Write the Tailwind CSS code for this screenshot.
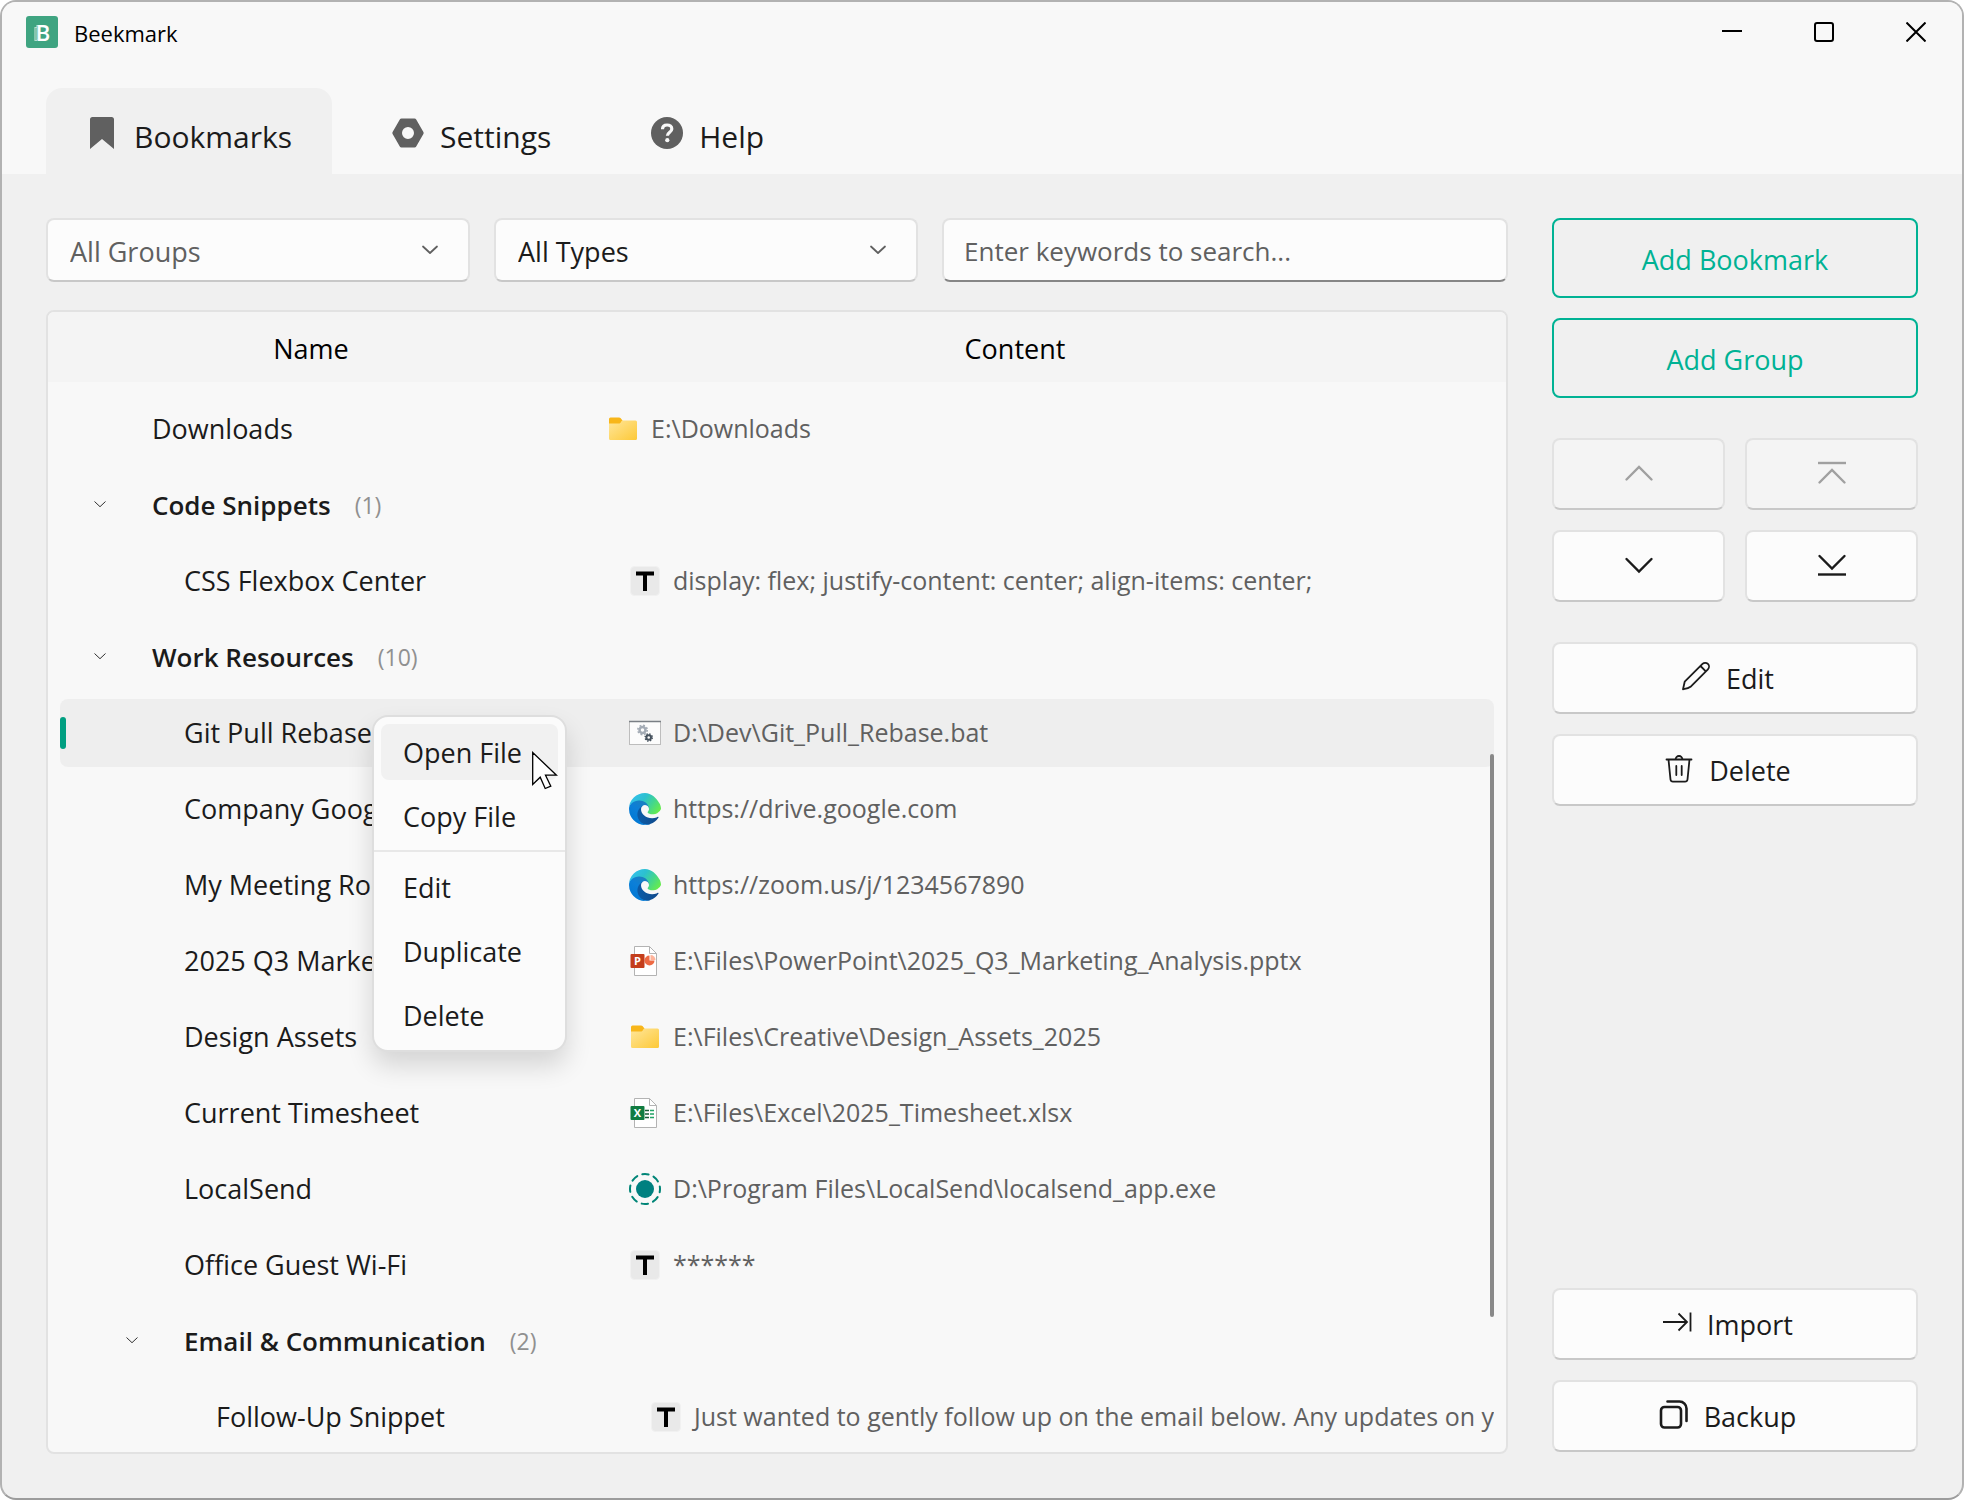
<!DOCTYPE html>
<html lang="en">
<head>
    <meta charset="UTF-8">
    <title>Beekmark</title>
    <script src="https://cdn.jsdelivr.net/npm/@tailwindcss/browser@4"></script>
</head>
<body class="bg-white font-['Open_Sans',sans-serif] text-[27px] text-[#1b1b1b]">

    <!-- Shared icons -->
    <svg class="absolute size-0" aria-hidden="true">
        <defs>
            <linearGradient id="folderFront" x1="0" y1="0" x2="1" y2="1">
                <stop offset="0" stop-color="#ffe69b" />
                <stop offset="1" stop-color="#fdc937" />
            </linearGradient>
            <linearGradient id="edgeNavy" x1="0.2" y1="0" x2="1" y2="0">
                <stop offset="0" stop-color="#0c59a4" />
                <stop offset="1" stop-color="#114a8b" />
            </linearGradient>
            <linearGradient id="edgeBlue" x1="0.8" y1="0.2" x2="0.3" y2="1">
                <stop offset="0" stop-color="#1b7fc2" />
                <stop offset="0.4" stop-color="#0c7fd8" />
                <stop offset="1" stop-color="#0078d4" />
            </linearGradient>
            <linearGradient id="edgeGreen" x1="0" y1="0.2" x2="1" y2="0.7">
                <stop offset="0" stop-color="#35c1f1" />
                <stop offset="0.4" stop-color="#2cc0cf" />
                <stop offset="0.7" stop-color="#43d68e" />
                <stop offset="1" stop-color="#66eb4e" />
            </linearGradient>
        </defs>
        <symbol id="icon-folder" viewBox="0 0 32 32">
            <path d="M2 6a1.500 1.500 0 0 1 1.500-1.500h8.500a2 2 0 0 1 1.500.6l2 2.400V14H2z" fill="#f8b61a" />
            <path d="M2 10.500h10.500c1.500 0 1.500-3 3-3H28.500A1.500 1.500 0 0 1 30 9v16.500a1.500 1.500 0 0 1-1.500 1.500h-25A1.500 1.500 0 0 1 2 25.500z" fill="url(#folderFront)" />
        </symbol>
        <symbol id="icon-text" viewBox="0 0 32 32">
            <rect x="1.500" y="1.500" width="29" height="29" rx="4" fill="#e9e9e9" stroke="#f1f1f1" />
            <path d="M7 8.500h18M16 8v18" stroke="#000" stroke-width="4" fill="none" />
        </symbol>
        <symbol id="icon-edge" viewBox="0 0 256 256">
            <g transform="translate(-4.630 -4.920)">
                <path d="M235.680 195.460a93.730 93.730 0 0 1-10.540 4.710 101.870 101.870 0 0 1-35.900 6.460c-47.320 0-88.540-32.550-88.540-74.320a31.480 31.480 0 0 1 16.430-27.670c-42.800 1.800-53.800 46.400-53.800 72.530 0 73.880 68.090 81.370 82.760 81.370 7.910 0 19.840-2.300 27-4.560l1.310-.44a128.340 128.340 0 0 0 66.600-52.800 4 4 0 0 0-5.320-5.280z" fill="url(#edgeNavy)" />
                <path d="M110.340 246.340A79.200 79.200 0 0 1 87.600 225a80.720 80.720 0 0 1 29.530-120.360c3.120-1.470 8.450-4.130 15.540-4a32.350 32.350 0 0 1 25.690 13 31.880 31.880 0 0 1 6.360 18.660c0-.21 24.460-79.600-80-79.600-43.900 0-80 41.660-80 78.210a130.150 130.150 0 0 0 12.110 56 128 128 0 0 0 156.380 67.110 75.550 75.550 0 0 1-62.780-8z" fill="url(#edgeBlue)" />
                <path d="M156.940 153.780c-.81 1.050-3.300 2.500-3.300 5.660 0 2.610 1.700 5.120 4.720 7.230 14.380 10 41.490 8.680 41.560 8.680a59.560 59.560 0 0 0 30.270-8.350 61.380 61.380 0 0 0 30.440-33.600c.26-22.410-8-37.310-11.340-43.910C228.090 48 182.350 4.920 132.610 4.920a128 128 0 0 0-128 126.200c.48-36.540 36.800-66.050 80-66.050 3.500 0 23.460.34 42 10.070 16.340 8.580 24.900 18.940 30.850 29.210 6.180 10.670 7.280 24.150 7.280 29.520s-2.740 13.330-7.800 19.910z" fill="url(#edgeGreen)" />
            </g>
        </symbol>
        <symbol id="icon-bat" viewBox="0 0 32 32">
            <rect x="0.500" y="4.500" width="31" height="23" fill="#fcfcfc" stroke="#bdbdbd" />
            <path d="M0 4.500h32" stroke="#7a7f85" stroke-width="1.500" />
            <circle cx="13.500" cy="13" r="3" fill="none" stroke="#a3abb5" stroke-width="2.500" />
            <circle cx="13.500" cy="13" r="4.700" fill="none" stroke="#a3abb5" stroke-width="1.600" stroke-dasharray="1.850 1.850" />
            <circle cx="19.700" cy="20.500" r="2.300" fill="none" stroke="#46525e" stroke-width="2" />
            <circle cx="19.700" cy="20.500" r="3.600" fill="none" stroke="#46525e" stroke-width="1.400" stroke-dasharray="1.420 1.420" />
        </symbol>
        <symbol id="icon-page" viewBox="0 0 32 32">
            <path d="M5.500 1.500H20.500l7 7v22h-22z" fill="#fff" stroke="#b3b3b3" />
            <path d="M20.500 1.500v7h7" fill="none" stroke="#b3b3b3" />
        </symbol>
        <symbol id="icon-pptx" viewBox="0 0 32 32">
            <use href="#icon-page" />
            <path d="M20.500 10.500a5 5 0 1 0 5 5h-5z" fill="#ee6a44" />
            <path d="M21.500 10v5h5a5 5 0 0 0-5-5z" fill="#ffb49b" />
            <rect x="1.500" y="9" width="14" height="14" rx="1" fill="#c43e1c" />
            <text x="8.500" y="20" text-anchor="middle" font-size="11" font-weight="700" fill="#fff">P</text>
        </symbol>
        <symbol id="icon-xlsx" viewBox="0 0 32 32">
            <use href="#icon-page" />
            <path d="M16 13.500h4M16 17h4M16 20.500h4" stroke="#185c37" stroke-width="1.700" />
            <path d="M21 13.500h4M21 17h4M21 20.500h4" stroke="#21a366" stroke-width="1.700" />
            <rect x="1.500" y="9" width="14" height="14" rx="1" fill="#107c41" />
            <text x="8.500" y="20" text-anchor="middle" font-size="11" font-weight="700" fill="#fff">X</text>
        </symbol>
        <symbol id="icon-localsend" viewBox="0 0 32 32">
            <circle cx="16" cy="16" r="9" fill="#008080" />
            <circle cx="16" cy="16" r="15" fill="none" stroke="#008577" stroke-width="2" stroke-linecap="round" stroke-dasharray="6.500 5.281" stroke-dashoffset="3.250" />
        </symbol>
        <symbol id="icon-tree" viewBox="0 0 12 12">
            <path d="M.5 2.500 6 7.700l5.500-5.200" fill="none" stroke="#303030" />
        </symbol>
        <symbol id="icon-select" viewBox="0 0 18 12">
            <path d="m2 2.500 7 6.500 7-6.500" fill="none" stroke="#606060" stroke-width="1.800" stroke-linecap="round" stroke-linejoin="round" />
        </symbol>
    </svg>

    <div class="flex h-screen flex-col overflow-hidden rounded-2xl border-2 border-[#b2b2b2] border-b-[#9c9c9c] bg-[#f0f0f0]">

        <header class="bg-[#f8f8f8]">
            <div class="flex h-[60px] items-center">
                <svg class="ml-6 size-8" viewBox="0 0 32 32" aria-hidden="true">
                    <rect width="32" height="32" rx="3" fill="#3fa481" />
                    <path d="M11 11.500H9v13H11M12 9.500h-1v14.500H12" fill="none" stroke="#b5dccd" stroke-width="1.200" />
                    <text x="17" y="24.500" text-anchor="middle" font-size="22" font-weight="600" fill="#fff">B</text>
                </svg>
                <h1 class="ml-4 pt-0.5 text-[22px] text-black">Beekmark</h1>
                <div class="ml-auto flex h-full">
                    <button type="button" aria-label="Minimize" class="flex w-[92px] items-center justify-center">
                        <svg class="size-5" viewBox="0 0 20 20"><path d="M0 9h20" stroke="#000" stroke-width="2" /></svg>
                    </button>
                    <button type="button" aria-label="Maximize" class="flex w-[92px] items-center justify-center">
                        <svg class="size-5" viewBox="0 0 20 20"><rect x="1" y="1" width="18" height="18" rx="2" fill="none" stroke="#000" stroke-width="2" /></svg>
                    </button>
                    <button type="button" aria-label="Close" class="flex w-[92px] items-center justify-center">
                        <svg class="size-5" viewBox="0 0 20 20"><path d="m.5.5 19 19m0-19-19 19" stroke="#000" stroke-width="2" /></svg>
                    </button>
                </div>
            </div>

            <nav class="mt-[26px] flex gap-5 px-11 text-[30px]">
                <a href="#bookmarks" class="flex h-[86px] items-center gap-4 rounded-t-2xl bg-[#f0f0f0] px-10 pt-2.5">
                    <svg class="mb-1.5 size-8" viewBox="0 0 32 32"><path d="M4 2.500A2.500 2.500 0 0 1 6.500 0h19A2.500 2.500 0 0 1 28 2.500V32L16 22 4 32z" fill="#606060" /></svg>
                    Bookmarks
                </a>
                <a href="#settings" class="flex h-[86px] items-center gap-4 rounded-t-2xl px-10 pt-2.5">
                    <svg class="mb-1.5 size-8" viewBox="0 0 32 32"><path fill-rule="evenodd" d="M9.500 1.500h13a2 2 0 0 1 1.700 1l7.200 12.500a2 2 0 0 1 0 2l-7.200 12.500a2 2 0 0 1-1.700 1h-13a2 2 0 0 1-1.700-1L.6 17a2 2 0 0 1 0-2L7.800 2.500a2 2 0 0 1 1.700-1zM16 10a6 6 0 1 0 0 12 6 6 0 0 0 0-12z" fill="#606060" /></svg>
                    Settings
                </a>
                <a href="#help" class="flex h-[86px] items-center gap-4 rounded-t-2xl px-10 pt-2.5">
                    <svg class="mb-1.5 size-8" viewBox="0 0 32 32">
                        <circle cx="16" cy="16" r="16" fill="#606060" />
                        <path d="M11.500 12.300c0-2.700 1.900-4.300 4.600-4.300s4.700 1.500 4.700 4c0 3.300-4.400 3.200-4.400 6.800" fill="none" stroke="#f8f8f8" stroke-width="3.200" />
                        <circle cx="16.300" cy="23.200" r="2.100" fill="#f8f8f8" />
                    </svg>
                    Help
                </a>
            </nav>
        </header>

        <main class="flex min-h-0 flex-1 gap-11 p-11">

            <section class="flex min-w-0 flex-1 flex-col gap-7">
                <form class="flex gap-6">
                    <div class="relative w-[424px]">
                        <select aria-label="Group" class="h-16 w-full appearance-none rounded-lg border-2 border-[#e2e2e2] border-b-[#c8c8c8] bg-[#fcfcfc] px-[22px] pt-1 text-[#606060]">
                            <option>All Groups</option>
                        </select>
                        <svg class="pointer-events-none absolute top-[26px] right-[31px] h-3 w-[18px]"><use href="#icon-select" /></svg>
                    </div>
                    <div class="relative w-[424px]">
                        <select aria-label="Type" class="h-16 w-full appearance-none rounded-lg border-2 border-[#e2e2e2] border-b-[#c8c8c8] bg-[#fcfcfc] px-[22px] pt-1">
                            <option>All Types</option>
                        </select>
                        <svg class="pointer-events-none absolute top-[26px] right-[31px] h-3 w-[18px]"><use href="#icon-select" /></svg>
                    </div>
                    <input type="text" aria-label="Search" placeholder="Enter keywords to search..." class="h-16 min-w-0 flex-1 rounded-lg border-2 border-[#e2e2e2] border-b-[#868686] bg-[#fcfcfc] px-5 pt-0.5 text-[26px] placeholder:text-[#606060]">
                </form>

                <div class="relative min-h-0 flex-1 overflow-hidden rounded-lg border-2 border-[#e2e2e2] bg-[#f8f8f8]">
                    <table class="w-full table-fixed border-separate border-spacing-0 whitespace-nowrap">
                        <thead class="bg-[#f4f4f4] text-black">
                            <tr class="h-[70px]">
                                <th class="w-[526px] pt-1 font-normal">Name</th>
                                <th class="pt-1 pr-[50px] font-normal">Content</th>
                            </tr>
                        </thead>
                        <tbody>
                            <tr class="h-[85px]">
                                <td class="pt-[9px]"><div class="ml-3 flex h-[68px] items-center pl-23">Downloads</div></td>
                                <td class="pt-[9px]"><div class="mr-3 flex h-[68px] items-center gap-3 overflow-hidden pl-[33px] text-[25px] text-[#606060]"><svg class="size-8 shrink-0"><use href="#icon-folder" /></svg>E:\Downloads</div></td>
                            </tr>
                            <tr class="h-[76px]">
                                <td>
                                    <div class="ml-3 flex h-[68px] items-center pl-[34px] text-[26px] font-semibold">
                                        <button type="button" aria-label="Collapse Code Snippets" class="mr-[46px]"><svg class="size-3"><use href="#icon-tree" /></svg></button>
                                        Code Snippets <span class="ml-6 text-[23px] font-normal text-[#909090]">(1)</span>
                                    </div>
                                </td>
                                <td></td>
                            </tr>
                            <tr class="h-[76px]">
                                <td><div class="ml-3 flex h-[68px] items-center pl-31">CSS Flexbox Center</div></td>
                                <td><div class="mr-3 flex h-[68px] items-center gap-3 overflow-hidden pl-[55px] text-[25px] text-[#606060]"><svg class="size-8 shrink-0"><use href="#icon-text" /></svg>display: flex; justify-content: center; align-items: center;</div></td>
                            </tr>
                            <tr class="h-[76px]">
                                <td>
                                    <div class="ml-3 flex h-[68px] items-center pl-[34px] text-[26px] font-semibold">
                                        <button type="button" aria-label="Collapse Work Resources" class="mr-[46px]"><svg class="size-3"><use href="#icon-tree" /></svg></button>
                                        Work Resources <span class="ml-6 text-[23px] font-normal text-[#909090]">(10)</span>
                                    </div>
                                </td>
                                <td></td>
                            </tr>
                            <tr class="h-[76px]" aria-selected="true">
                                <td class="relative">
                                    <div class="ml-3 flex h-[68px] items-center rounded-l-lg bg-[#eeeeee]">
                                        <span class="mr-[118px] h-8 w-1.5 rounded-full bg-[#009f81]"></span>Git Pull Rebase
                                    </div>

                                    <!-- Context menu -->
                                    <div role="menu" class="absolute top-5 left-[324px] z-10 flex w-[195px] flex-col gap-2 rounded-2xl border-2 border-[#dedede] bg-[#fbfbfb] py-[7px] shadow-[0_14px_26px_rgba(0,0,0,0.14)]">
                                        <button type="button" role="menuitem" class="mx-[7px] h-14 rounded-lg bg-[#f1f1f1] px-[22px] pt-0.5 text-left">Open File</button>
                                        <button type="button" role="menuitem" class="mx-[7px] h-14 rounded-lg px-[22px] pt-0.5 text-left">Copy File</button>
                                        <hr class="-mt-0.5 -mb-px border-t-2 border-[#e8e8e8]">
                                        <button type="button" role="menuitem" class="mx-[7px] h-14 rounded-lg px-[22px] pt-0.5 text-left">Edit</button>
                                        <button type="button" role="menuitem" class="mx-[7px] h-14 rounded-lg px-[22px] pt-0.5 text-left">Duplicate</button>
                                        <button type="button" role="menuitem" class="mx-[7px] h-14 rounded-lg px-[22px] pt-0.5 text-left">Delete</button>
                                        <svg class="absolute top-[34px] left-[158px] h-[39px] w-[26px]" viewBox="0 0 26 39"><path d="M.7 1.500v32l7.500-7.300 5 11.300 5.600-2.300-5.300-11h11z" fill="#fff" stroke="#000" stroke-width="1.300" /></svg>
                                    </div>
                                </td>
                                <td><div class="mr-3 flex h-[68px] items-center gap-3 overflow-hidden rounded-r-lg bg-[#eeeeee] pl-[55px] text-[25px] text-[#606060]"><svg class="size-8 shrink-0"><use href="#icon-bat" /></svg>D:\Dev\Git_Pull_Rebase.bat</div></td>
                            </tr>
                            <tr class="h-[76px]">
                                <td><div class="ml-3 flex h-[68px] items-center pl-31">Company Google Drive</div></td>
                                <td><div class="mr-3 flex h-[68px] items-center gap-3 overflow-hidden pl-[55px] text-[25px] text-[#606060]"><svg class="size-8 shrink-0"><use href="#icon-edge" /></svg>https://drive.google.com</div></td>
                            </tr>
                            <tr class="h-[76px]">
                                <td><div class="ml-3 flex h-[68px] items-center pl-31">My Meeting Room</div></td>
                                <td><div class="mr-3 flex h-[68px] items-center gap-3 overflow-hidden pl-[55px] text-[25px] text-[#606060]"><svg class="size-8 shrink-0"><use href="#icon-edge" /></svg>https://zoom.us/j/1234567890</div></td>
                            </tr>
                            <tr class="h-[76px]">
                                <td><div class="ml-3 flex h-[68px] items-center pl-31">2025 Q3 Marketing</div></td>
                                <td><div class="mr-3 flex h-[68px] items-center gap-3 overflow-hidden pl-[55px] text-[25px] text-[#606060]"><svg class="size-8 shrink-0"><use href="#icon-pptx" /></svg>E:\Files\PowerPoint\2025_Q3_Marketing_Analysis.pptx</div></td>
                            </tr>
                            <tr class="h-[76px]">
                                <td><div class="ml-3 flex h-[68px] items-center pl-31">Design Assets</div></td>
                                <td><div class="mr-3 flex h-[68px] items-center gap-3 overflow-hidden pl-[55px] text-[25px] text-[#606060]"><svg class="size-8 shrink-0"><use href="#icon-folder" /></svg>E:\Files\Creative\Design_Assets_2025</div></td>
                            </tr>
                            <tr class="h-[76px]">
                                <td><div class="ml-3 flex h-[68px] items-center pl-31">Current Timesheet</div></td>
                                <td><div class="mr-3 flex h-[68px] items-center gap-3 overflow-hidden pl-[55px] text-[25px] text-[#606060]"><svg class="size-8 shrink-0"><use href="#icon-xlsx" /></svg>E:\Files\Excel\2025_Timesheet.xlsx</div></td>
                            </tr>
                            <tr class="h-[76px]">
                                <td><div class="ml-3 flex h-[68px] items-center pl-31">LocalSend</div></td>
                                <td><div class="mr-3 flex h-[68px] items-center gap-3 overflow-hidden pl-[55px] text-[25px] text-[#606060]"><svg class="size-8 shrink-0"><use href="#icon-localsend" /></svg>D:\Program Files\LocalSend\localsend_app.exe</div></td>
                            </tr>
                            <tr class="h-[76px]">
                                <td><div class="ml-3 flex h-[68px] items-center pl-31">Office Guest Wi-Fi</div></td>
                                <td><div class="mr-3 flex h-[68px] items-center gap-3 overflow-hidden pl-[55px] text-[25px] text-[#606060]"><svg class="size-8 shrink-0"><use href="#icon-text" /></svg>******</div></td>
                            </tr>
                            <tr class="h-[76px]">
                                <td>
                                    <div class="ml-3 flex h-[68px] items-center pl-[66px] text-[26px] font-semibold">
                                        <button type="button" aria-label="Collapse Email &amp; Communication" class="mr-[46px]"><svg class="size-3"><use href="#icon-tree" /></svg></button>
                                        Email &amp; Communication <span class="ml-6 text-[23px] font-normal text-[#909090]">(2)</span>
                                    </div>
                                </td>
                                <td></td>
                            </tr>
                            <tr class="h-[76px]">
                                <td><div class="ml-3 flex h-[68px] items-center pl-39">Follow-Up Snippet</div></td>
                                <td><div class="mr-3 flex h-[68px] items-center gap-3 overflow-hidden pl-[76px] text-[25px] text-[#606060]"><svg class="size-8 shrink-0"><use href="#icon-text" /></svg>Just wanted to gently follow up on the email below. Any updates on your side?</div></td>
                            </tr>
                        </tbody>
                    </table>
                    <div class="absolute top-[442px] right-3 h-[563px] w-1 rounded-full bg-[#898989]"></div>
                </div>
            </section>

            <aside class="flex w-[366px] shrink-0 flex-col gap-5 pb-0.5">
                <button type="button" class="h-20 rounded-lg border-2 border-[#00b294] pt-1 text-[#00b294]">Add Bookmark</button>
                <button type="button" class="h-20 rounded-lg border-2 border-[#00b294] pt-1 text-[#00b294]">Add Group</button>

                <div class="my-5 grid grid-cols-2 gap-5">
                    <button type="button" disabled aria-label="Move up" class="flex h-18 items-center justify-center rounded-lg border-2 border-[#e2e2e2] border-b-[#c8c8c8] bg-[#f4f4f4]">
                        <svg class="size-8" viewBox="0 0 32 32" fill="none" stroke="#a0a0a0" stroke-width="2.400" stroke-linecap="round"><path d="M3.500 21.500 16 9l12.500 12.500" /></svg>
                    </button>
                    <button type="button" disabled aria-label="Move to top" class="flex h-18 items-center justify-center rounded-lg border-2 border-[#e2e2e2] border-b-[#c8c8c8] bg-[#f4f4f4]">
                        <svg class="size-8" viewBox="0 0 32 32" fill="none" stroke="#a0a0a0" stroke-width="2.400"><path d="M2 5h28" /><path d="M3.500 24.500 16 12l12.500 12.500" stroke-linecap="round" /></svg>
                    </button>
                    <button type="button" aria-label="Move down" class="flex h-18 items-center justify-center rounded-lg border-2 border-[#e2e2e2] border-b-[#c8c8c8] bg-[#fcfcfc]">
                        <svg class="size-8" viewBox="0 0 32 32" fill="none" stroke="#1b1b1b" stroke-width="2.400" stroke-linecap="round"><path d="M3.500 9 16 21.500 28.500 9" /></svg>
                    </button>
                    <button type="button" aria-label="Move to bottom" class="flex h-18 items-center justify-center rounded-lg border-2 border-[#e2e2e2] border-b-[#c8c8c8] bg-[#fcfcfc]">
                        <svg class="size-8" viewBox="0 0 32 32" fill="none" stroke="#1b1b1b" stroke-width="2.400"><path d="M2 24.500h28" /><path d="M3.500 6 16 18.500 28.500 6" stroke-linecap="round" /></svg>
                    </button>
                </div>

                <button type="button" class="flex h-18 items-center justify-center gap-3.5 rounded-lg border-2 border-[#e2e2e2] border-b-[#c8c8c8] bg-[#fcfcfc] pt-0.5 pr-4">
                    <svg class="mb-1.5 size-8" viewBox="0 0 32 32" fill="none" stroke="#1b1b1b" stroke-width="1.800" stroke-linejoin="round"><path d="m3 29.300 1.700-7.600L22.500 3.900a3.700 3.700 0 0 1 5.400 5.400L10.500 26.800c-2 1.500-5 2-7.500 2.500zM20.500 6l5.300 5.300" /></svg>
                    Edit
                </button>
                <button type="button" class="flex h-18 items-center justify-center gap-3.5 rounded-lg border-2 border-[#e2e2e2] border-b-[#c8c8c8] bg-[#fcfcfc] pt-0.5 pr-4">
                    <svg class="mb-1.5 size-8" viewBox="0 0 32 32" fill="none" stroke="#1b1b1b" stroke-width="1.800" stroke-linecap="round" stroke-linejoin="round"><path d="M3.500 7.500h25M12.500 7.500a3.500 3.500 0 0 1 7 0M5.500 7.500l2 20a2.500 2.500 0 0 0 2.500 2.200h12a2.500 2.500 0 0 0 2.500-2.200l2-20M13.300 14v9M18.700 14v9" /></svg>
                    Delete
                </button>

                <button type="button" class="mt-auto flex h-18 items-center justify-center gap-3.5 rounded-lg border-2 border-[#e2e2e2] border-b-[#c8c8c8] bg-[#fcfcfc] pt-0.5 pr-4">
                    <svg class="mb-1.5 size-8" viewBox="0 0 32 32" fill="none" stroke="#1b1b1b" stroke-width="1.800"><path d="M2 16h24M17.500 7.500l8.500 8.500-8.500 8.500M29.500 6.500v19" /></svg>
                    Import
                </button>
                <button type="button" class="flex h-18 items-center justify-center gap-3.5 rounded-lg border-2 border-[#e2e2e2] border-b-[#c8c8c8] bg-[#fcfcfc] pt-0.5 pr-4">
                    <svg class="mb-1.5 size-8" viewBox="0 0 32 32" fill="none" stroke="#1b1b1b" stroke-width="2.600" stroke-linecap="round"><rect x="3" y="9" width="20" height="20.500" rx="3.500" /><path d="M9.500 3.500h12a7 7 0 0 1 7 7V23" /></svg>
                    Backup
                </button>
            </aside>
        </main>
    </div>
</body>
</html>
